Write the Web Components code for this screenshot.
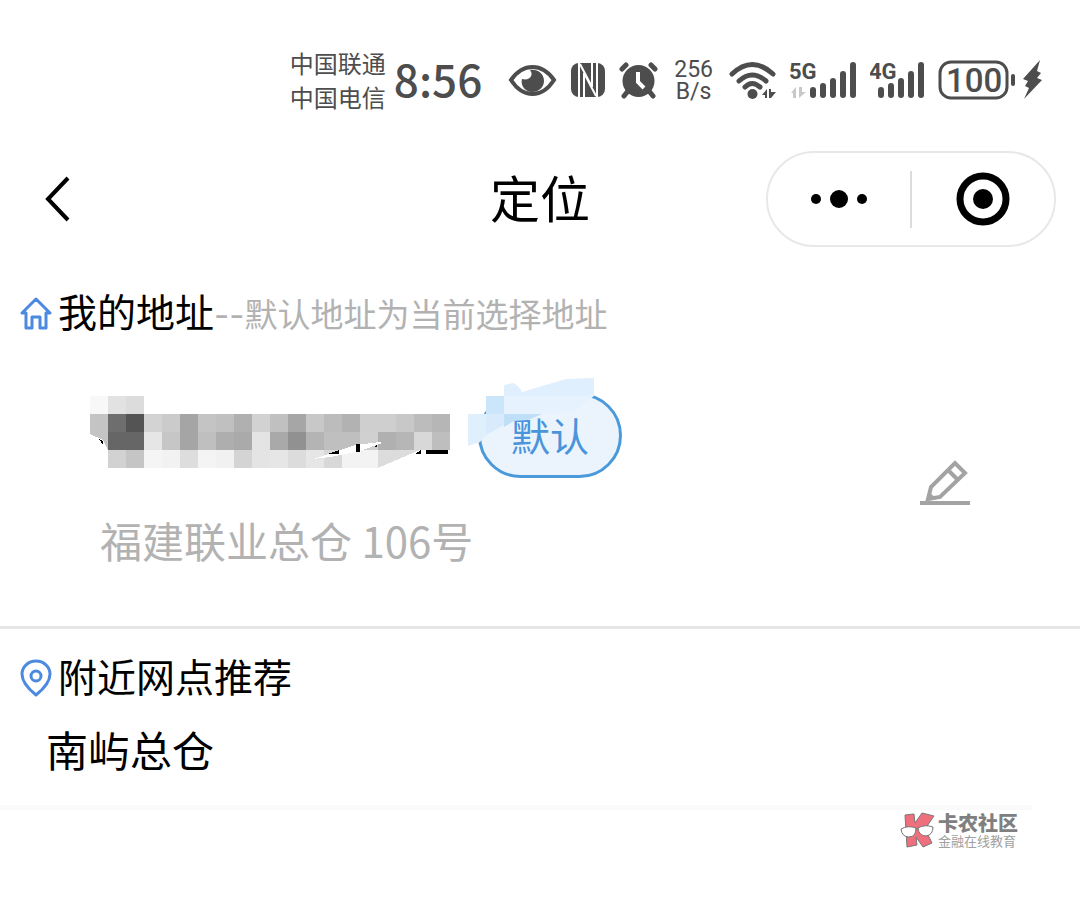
<!DOCTYPE html>
<html lang="zh-CN">
<head>
<meta charset="utf-8">
<meta name="viewport" content="width=device-width, initial-scale=1">
<title>定位</title>
<style>
    body {
        margin: 0;
        background: #fff;
        color: #000;
        font-family: "Noto Sans CJK SC", sans-serif;
    }
</style>
</head>
<body>
<location-page></location-page>

<script>
function define(name, html) {
    const template = document.createElement("template");
    template.innerHTML = html;

    customElements.define(name, class extends HTMLElement {
        constructor() {
            super();
            this.attachShadow({mode: "open"}).appendChild(template.content.cloneNode(true));
        }
    });
}

// bars shared by both signal icons, x is the left edge of the first bar
function bars(x) {
    return [27, 23, 18, 11, 2]
        .map((top, i) => `<rect x="${x + i * 10}" y="${top}" width="6" height="${38 - top}" rx="3"/>`)
        .join("");
}

// one row of the mosaic, 18px cells, two hex digits of grey for each
function cells(y, x, greys) {
    return greys.split(" ")
        .map((g, i) => `<rect x="${x + i * 18}" y="${y}" width="18" height="18" fill="#${g}${g}${g}"/>`)
        .join("");
}

define("status-bar", `
    <style>
        :host {
            display: flex;
            justify-content: flex-end;
            align-items: center;
            gap: 14px;
            padding: 46px 38px 0;
            color: #4d4d4d;
        }

        svg {
            display: block;
            flex: none;
            fill: currentColor;
            font-family: Roboto, sans-serif;
            font-weight: 700;
        }

        .carrier {
            font-size: 24px;
            line-height: 34px;
            margin-right: -6px;
        }

        .time {
            font-size: 44px;
            line-height: 64px;
            padding-bottom: 4px;
            font-weight: 500;
            margin-right: 12px;
        }

        .speed {
            font: 23px/22px Roboto, sans-serif;
            text-align: center;
            padding: 2px 2px 0;
        }

        .line {
            fill: none;
            stroke: currentColor;
            stroke-width: 5;
            stroke-linecap: round;
        }

        .cut {
            fill: none;
            stroke: #fff;
            stroke-width: 2;
        }
    </style>
    <div class="carrier">中国联通<br>中国电信</div>
    <div class="time">8:56</div>
    <svg width="49" height="40" viewBox="0 0 49 40">
        <path d="M3 20Q12 7 24.500 7T46 20Q37 34 24.500 34T3 20Z" class="line" style="stroke-width:4"/>
        <path d="M22 10C26 15 22 21 14 19C12 26 18 32 24 32C31 32 36 27 36 21C36 14 30 9 22 10Z"/>
    </svg>
    <svg width="34" height="40" viewBox="0 0 34 40">
        <rect y="3" width="34" height="34" rx="8"/>
        <path class="cut" d="M8 2V38M26 2V38M13 38V13L25 36M21 2V27L9 4"/>
    </svg>
    <svg width="39" height="40" viewBox="0 0 39 40">
        <circle cx="19.500" cy="21" r="16"/>
        <path class="line" d="M3 9L7 5M32 5L36 9M5 36L9 31M30 31L34 36"/>
        <path class="cut" style="stroke-width:4" d="M19 12V22L25 28"/>
    </svg>
    <div class="speed">256<br>B/s</div>
    <svg width="47" height="40" viewBox="0 0 47 40">
        <path class="line" d="M3 14Q23 -5 44 14M10 21Q23 9 37 21M16 27Q23 20 31 27"/>
        <circle cx="23.500" cy="34" r="5"/>
        <path d="M33 35L38 29V38H36V35ZM40 29H42V32H47L42 38H40Z"/>
    </svg>
    <svg width="66" height="40" viewBox="0 0 66 40">
        <text x="-1" y="19" font-size="22">5G</text>
        <path fill="#c8c8c8" d="M1 33L6 27V38H3V33ZM9 27H12V32H16L9 38Z"/>
        ${bars(20)}
    </svg>
    <svg width="54" height="40" viewBox="0 0 54 40">
        <text x="-1" y="19" font-size="22">4G</text>
        ${bars(8)}
    </svg>
    <svg width="78" height="40" viewBox="0 0 78 40">
        <rect class="line" style="stroke-width:3" x="2" y="2" width="67" height="36" rx="11"/>
        <rect x="73" y="14" width="4" height="12" rx="2"/>
        <text x="8" y="32" font-size="33" font-weight="500" style="font-weight:500">100</text>
    </svg>
    <svg width="20" height="40" viewBox="0 0 20 40" style="margin-left:-8px">
        <path d="M18 0L1 19L6 21L3 26L7 28L2 39L20 20L15 18L19 13L15 11Z"/>
    </svg>
`);

define("mini-capsule", `
    <style>
        :host {
            display: flex;
            align-items: center;
            box-sizing: border-box;
            width: 290px;
            height: 96px;
            border: 2px solid #e8e8e8;
            border-radius: 48px;
        }

        button {
            flex: 1;
            display: flex;
            justify-content: center;
            padding: 0;
            border: 0;
            background: none;
        }

        i {
            width: 2px;
            height: 57px;
            background: #dcdcdc;
        }
    </style>
    <button aria-label="更多">
        <svg width="56" height="20" viewBox="0 0 56 20">
            <circle cx="5" cy="10" r="5"/><circle cx="28" cy="10" r="9"/><circle cx="51" cy="10" r="5"/>
        </svg>
    </button>
    <i></i>
    <button aria-label="关闭">
        <svg width="54" height="54" viewBox="0 0 54 54">
            <circle cx="27" cy="27" r="23" fill="none" stroke="#000" stroke-width="7"/>
            <circle cx="27" cy="27" r="10"/>
        </svg>
    </button>
`);

define("nav-bar", `
    <style>
        :host {
            display: grid;
            grid-template-columns: 1fr auto 1fr;
            align-items: center;
            padding: 37px 24px 35px;
        }

        button {
            justify-self: start;
            display: block;
            padding: 0 20px;
            border: 0;
            background: none;
        }

        svg {
            display: block;
        }

        h1 {
            margin: 0;
            padding-bottom: 6px;
            font-size: 50px;
            line-height: 60px;
            font-weight: 400;
        }

        mini-capsule {
            justify-self: end;
        }
    </style>
    <button aria-label="返回">
        <svg width="26" height="46" viewBox="0 0 26 46" fill="none" stroke="#000" stroke-width="4">
            <path d="M24 2L4 23L24 44"/>
        </svg>
    </button>
    <h1><slot></slot></h1>
    <mini-capsule></mini-capsule>
`);

define("section-title", `
    <style>
        :host {
            display: flex;
            align-items: center;
            gap: 6px;
            padding: 0 20px;
        }

        h2 {
            margin: 0;
            font-size: 39px;
            line-height: 56px;
            font-weight: 400;
        }

        ::slotted(svg) {
            flex: none;
            margin-top: 6px;
            fill: none;
            stroke: #4b8ae0;
            stroke-width: 3px;
            stroke-linejoin: round;
        }

        ::slotted(small) {
            font-size: 33px;
            line-height: 33px;
            color: #b2b2b2;
        }
    </style>
    <slot name="icon"></slot>
    <h2><slot></slot></h2>
`);

define("default-badge", `
    <style>
        :host {
            display: block;
            position: relative;
        }

        span {
            display: block;
            box-sizing: border-box;
            width: 144px;
            height: 85px;
            border: 3px solid #4a9adb;
            border-radius: 43px;
            background: #ebf4fd;
            color: #4a94db;
            font-size: 39px;
            line-height: 76px;
            text-align: center;
        }

        svg {
            position: absolute;
            left: -12px;
            top: -16px;
        }
    </style>
    <span><slot></slot></span>
    <svg width="145" height="75" viewBox="0 0 145 75">
        <path fill="#e0effc" d="M2 37H20V58L14 65L2 69Z"/>
        <path fill="#cbe5fb" d="M20 19H38V37H20Z"/>
        <path fill="#d8eafb" d="M20 37H38V48L20 58Z"/>
        <path fill="#bfdef8" d="M38 37H76L62 43L48 44L38 50Z"/>
        <path fill="#e0effd" d="M38 8L47 6Q52 8 56 15L100 2L128 1V19H38Z"/>
        <path fill="#e6f2fd" d="M38 19H128L110 33L90 37H38Z"/>
    </svg>
`);

define("masked-name", `
    <style>
        :host,
        svg {
            display: block;
        }
    </style>
    <svg width="388" height="85" viewBox="0 0 388 85" shape-rendering="crispEdges">
        ${cells(3, 0, "f8 e2 dc")}
        ${cells(21, 0, "c4 6e 54 d3 cb a5 c4 c0 b0 d2 c0 a6 c8 bc b2 cf cf c8 bc b6")}
        ${cells(39, 18, "66 66 e6 c6 a5 bf ae aa e4 a9 91 b4 bf bf d0 b0 b6 d8 be")}
        ${cells(57, 18, "d2 c5 f5 f2 dd f4 f1 d4 e4 e6 dc e6 d8 f3 f3")}
        <path fill="#c4c4c4" d="M0 39H18V57L13 47L0 41Z"/>
        <path fill="#dcdcdc" d="M288 57H330L288 75Z"/>
        <path fill="#fff" d="M223 66L266 52L290 49L292 50L270 58L240 64Z"/>
        <path d="M9 46L13 48V52ZM238 61L249 57V61ZM266 51H270V59H266ZM284 54L287 52V54ZM325 61L331 57V61ZM336 57H358V61H336Z"/>
    </svg>
`);

define("address-item", `
    <style>
        :host {
            display: flex;
            justify-content: space-between;
            align-items: center;
            padding: 55px 110px 56px 90px;
            border-bottom: 3px solid #e6e6e6;
        }

        .name {
            display: flex;
        }

        p {
            margin: 32px 0 0;
            padding-left: 10px;
            font-size: 42px;
            line-height: 60px;
            color: #b2b2b2;
        }

        button {
            padding: 0;
            border: 0;
            background: none;
        }

        svg {
            display: block;
        }
    </style>
    <div>
        <div class="name">
            <masked-name></masked-name>
            <default-badge>默认</default-badge>
        </div>
        <p><slot></slot></p>
    </div>
    <button aria-label="编辑">
        <svg width="50" height="46" viewBox="0 0 50 46" fill="none" stroke="#a3a3a3" stroke-width="4">
            <path d="M8 40L11 28L35 4L45 14L20 38ZM28 11L38 21M0 44H50"/>
            <path d="M6 42L9 33L17 40Z" fill="#a3a3a3" stroke="none"/>
        </svg>
    </button>
`);

define("branch-item", `
    <style>
        :host {
            display: block;
            margin-right: 48px;
            padding: 16px 46px 26px;
            border-bottom: 5px solid #fafafa;
            font-size: 42px;
            line-height: 60px;
        }
    </style>
    <slot></slot>
`);

define("site-mark", `
    <style>
        :host {
            display: flex;
            justify-content: flex-end;
            gap: 3px;
            padding: 2px 62px 0;
            color: #808080;
        }

        b,
        span {
            display: block;
        }

        b {
            font-size: 20px;
            line-height: 22px;
            font-weight: 900;
        }

        span {
            font-size: 13px;
            line-height: 14px;
            color: #a0a0a0;
        }
    </style>
    <svg width="35" height="36" viewBox="0 0 35 36" stroke="#777" stroke-width="1">
        <path fill="#ef6f7c" d="M5 3L14 2L15 11L22 1L34 4L25 17L32 31L23 35L16 25L17 33L7 35Z"/>
        <path fill="#fff" d="M1 17Q8 13 16 16Q16 25 9 25Q2 25 1 17ZM18 16Q25 12 33 15Q33 23 26 24Q19 24 18 16Z"/>
        <path fill="none" d="M16 17L18 16"/>
    </svg>
    <div>
        <b>卡农社区</b>
        <span>金融在线教育</span>
    </div>
`);

define("location-page", `
    <style>
        :host {
            display: block;
        }

        section + section {
            padding-top: 18px;
        }

        small span {
            font-family: Inter, sans-serif;
        }
    </style>
    <status-bar></status-bar>
    <nav-bar>定位</nav-bar>
    <section>
        <section-title>
            <svg slot="icon" width="32" height="36" viewBox="0 0 32 36">
                <path d="M6 18H2L16 4L30 18H26V33H20V22H12V33H6Z"/>
            </svg>
            我的地址<small><span>--</span>默认地址为当前选择地址</small>
        </section-title>
        <address-item>福建联业总仓 106号</address-item>
    </section>
    <section>
        <section-title>
            <svg slot="icon" width="32" height="40" viewBox="0 0 32 40">
                <path d="M16 37C11 33 2 25 2 16A14 13 0 0 1 30 16C30 25 21 33 16 37Z"/>
                <circle cx="16" cy="18" r="5"/>
            </svg>
            附近网点推荐
        </section-title>
        <branch-item>南屿总仓</branch-item>
    </section>
    <site-mark></site-mark>
`);
</script>
</body>
</html>
